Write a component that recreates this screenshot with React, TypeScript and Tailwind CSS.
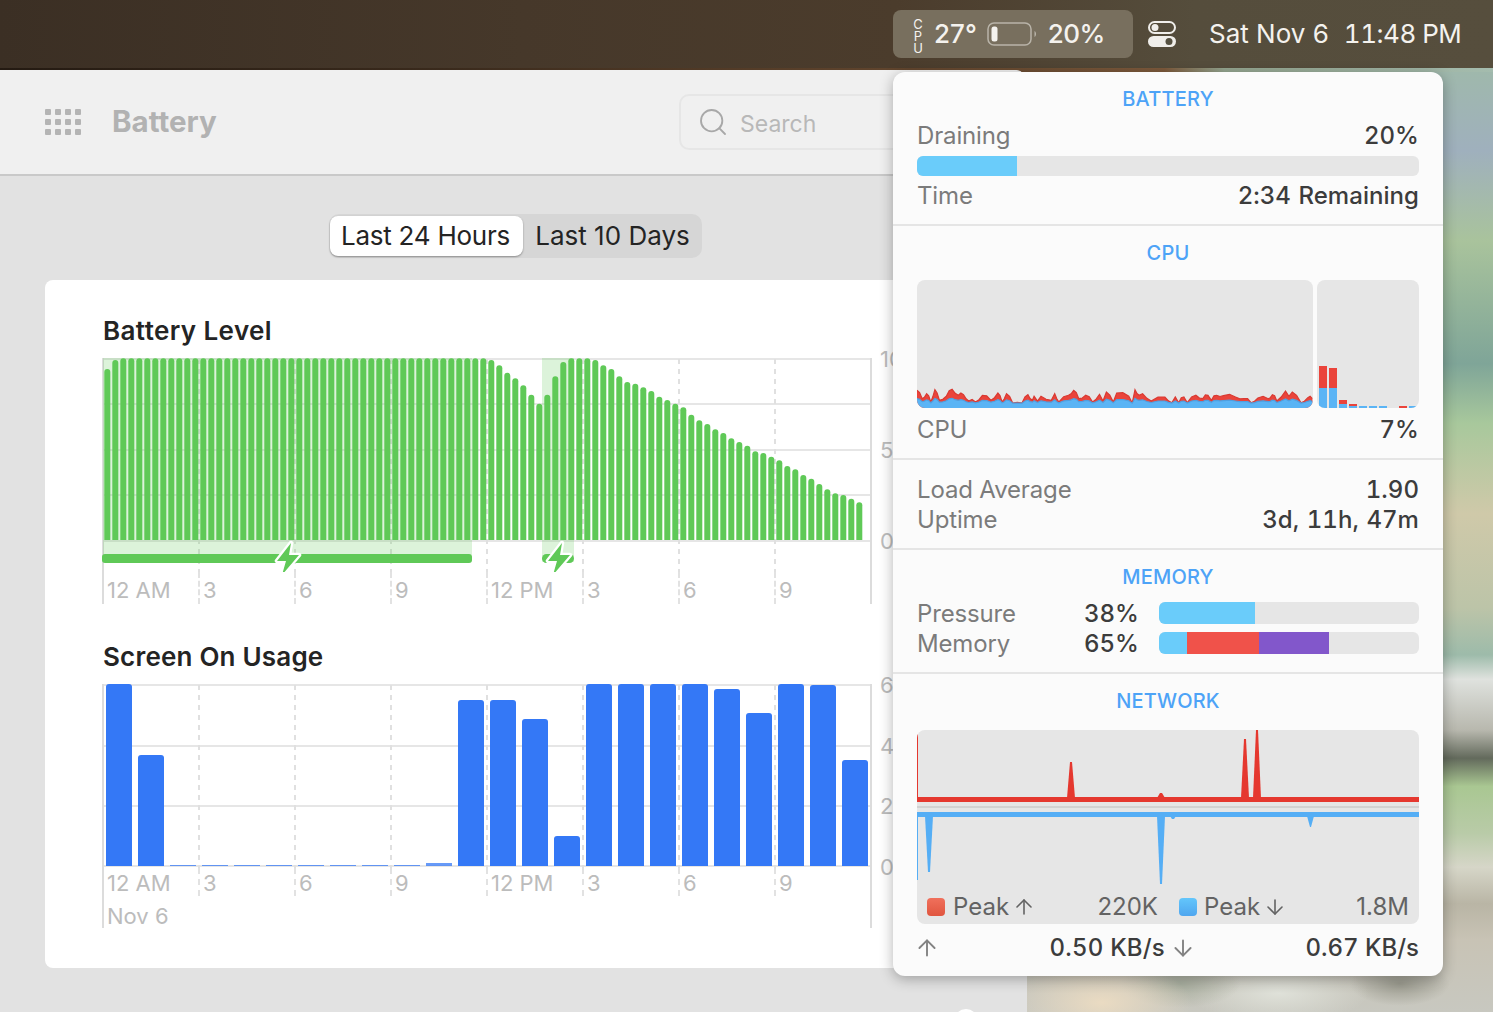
import type { ReactNode } from "react";
import { ArrowDown, ArrowUp, Search } from "lucide-react";

const batteryTops = [
  57, 30, ...Array(45).fill(25),
  25, 30, 46, 68, 85, 106, 134, 161, 134, 79, 36, 25, 25, 25, 30, 46, 57, 79, 96, 101, 112, 123, 140, 150, 161, 172, 194, 211, 222, 238, 249, 265, 276, 287, 304, 309, 320, 331, 348, 358, 375, 386, 402, 418, 430, 435, 446, 457,
];
const screenTops = [684, 755, 865, 865, 865, 865, 865, 865, 865, 865, 863, 700, 700, 719, 836, 684, 684, 684, 684, 689, 713, 684, 685, 760];
const cpuBase: [number, number][] = [
  [50, 360], [65, 385], [78, 370], [90, 395], [102, 358], [115, 390], [135, 378], [152, 357], [170, 375], [185, 373], [200, 392], [220, 395], [240, 375], [265, 390], [285, 368], [297, 395], [310, 370], [328, 398], [355, 398], [372, 373], [385, 390], [390, 378], [400, 392], [410, 378], [440, 390], [450, 370], [462, 395], [490, 375], [505, 360], [520, 385], [540, 375], [560, 395], [580, 372], [590, 392], [600, 365], [620, 395], [630, 368], [665, 378], [675, 398], [683, 358], [695, 375], [705, 370], [730, 392], [770, 380], [790, 397], [800, 380], [810, 397], [825, 380], [835, 397], [860, 375], [880, 385], [895, 375], [905, 390], [920, 375], [940, 376], [975, 380], [1000, 385], [1020, 397], [1040, 383], [1070, 385], [1082, 373], [1095, 392], [1120, 362], [1130, 378], [1140, 365], [1165, 397], [1185, 382], [1198, 385],
];
const cpuPts: [number, number][] = cpuBase.flatMap((p, i) => {
  const n = cpuBase[i + 1];
  if (!n || n[0] - p[0] < 12) return [p];
  const mid: [number, number] = [(p[0] + n[0]) / 2, Math.min(396, (p[1] + n[1]) / 2 + (i % 2 ? 3 : -6))];
  return [p, mid];
});
const cpuX = (X: number) => ((X - 50) / 2.904).toFixed(1);
const redH = (Y: number) => (413 - Y) / 3;
const redLine = cpuPts.map(([X, Y]) => `${cpuX(X)},${(128 - redH(Y)).toFixed(1)}`).join(" L");
const redArea = `M0,128 L${redLine} L396,128 Z`;
const blueLine = cpuPts.map(([X, Y]) => `${cpuX(X)},${(128 - (3 + redH(Y) * 0.36)).toFixed(1)}`).join(" L");
const blueArea = `M0,128 L${blueLine} L396,128 Z`;
const coreBars = [
  { x: 2, red: 366, blue: 388 },
  { x: 12, red: 368, blue: 388 },
  { x: 22, red: 400, blue: 404 },
  { x: 32, red: 404, blue: 406 },
  { x: 42, red: 406, blue: 406 },
  { x: 52, red: 406, blue: 406 },
  { x: 62, red: 406, blue: 406 },
  { x: 82, red: 406, blue: 408 },
  { x: 92, red: 406, blue: 406 },
];
const hourLabels = ["12 AM", "3", "6", "9", "12 PM", "3", "6", "9"];
const dashX = [97, 193, 289, 385, 481, 577, 673];

function Bolt({ x, y }: { x: number; y: number }) {
  return (
    <path
      transform={`translate(${x} ${y})`}
      d="M15 0 L1 18 L10 18 L6 32 L23 12 L13 12 Z"
      fill="#5fc957"
      stroke="#ffffff"
      strokeWidth="4.5"
      strokeLinejoin="round"
      paintOrder="stroke"
    />
  );
}

function HourRow({ className, labelClass }: { className: string; labelClass: string }) {
  return (
    <div className={`flex w-[770px] border-r-2 border-[#dcdcdc] ${className}`}>
      {hourLabels.map((l, i) => (
        <div
          key={i}
          className={`w-[96px] border-l-2 pl-[3px] ${i === 0 ? "border-solid border-[#dcdcdc]" : "border-dashed border-[#e2e2e2]"}`}
        >
          <span className={`block text-[22px] leading-[28px] text-[#bcbcbc] ${labelClass}`}>{l}</span>
        </div>
      ))}
    </div>
  );
}

function BatteryChart() {
  return (
    <svg width="771" height="214" className="block">
      <g stroke="#e6e6e6" strokeWidth="2">
        {[1, 46, 92, 137, 183].map((y) => (
          <line key={y} x1="1" x2="769" y1={y} y2={y} />
        ))}
        <line x1="1" x2="1" y1="0" y2="214" stroke="#dcdcdc" />
        <line x1="769" x2="769" y1="0" y2="214" stroke="#dcdcdc" />
      </g>
      {dashX.map((x) => (
        <line key={x} x1={x} x2={x} y1="1" y2="214" stroke="#e0e0e0" strokeWidth="2" strokeDasharray="5 5" />
      ))}
      <rect x="1" y="0" width="369" height="197" fill="#5fc957" opacity="0.22" />
      <rect x="440" y="0" width="32" height="204" fill="#5fc957" opacity="0.22" />
      {batteryTops.map((t, i) => {
        const x = 2.3 + 8 * i;
        const y = 182 - (570 - t) / 3;
        return <path key={i} d={`M${x} 182 V${y + 3} a3 3 0 0 1 6 0 V182 Z`} fill="#5fc957" />;
      })}
      <rect x="0" y="196" width="370" height="9" rx="3" fill="#5fc957" />
      <rect x="440" y="196" width="32" height="9" rx="4.5" fill="#5fc957" />
      <Bolt x={174} y={185} />
      <Bolt x={445} y={185} />
    </svg>
  );
}

function ScreenChart() {
  return (
    <svg width="771" height="184" className="block">
      <g stroke="#e6e6e6" strokeWidth="2">
        {[1, 62, 122, 182].map((y) => (
          <line key={y} x1="1" x2="769" y1={y} y2={y} />
        ))}
        <line x1="1" x2="1" y1="0" y2="184" stroke="#dcdcdc" />
        <line x1="769" x2="769" y1="0" y2="184" stroke="#dcdcdc" />
      </g>
      {dashX.map((x) => (
        <line key={x} x1={x} x2={x} y1="1" y2="184" stroke="#e0e0e0" strokeWidth="2" strokeDasharray="5 5" />
      ))}
      {screenTops.map((t, i) => {
        const x = 4 + 32 * i;
        const y = t - 684;
        const h = 182 - y;
        if (h < 4) return <rect key={i} x={x} y={y} width="26" height={h} fill="#3478f6" opacity="0.75" />;
        return <path key={i} d={`M${x} 182 V${y + 3} a3 3 0 0 1 3 -3 H${x + 23} a3 3 0 0 1 3 3 V182 Z`} fill="#3478f6" />;
      })}
    </svg>
  );
}

function YAxis({ labels, className }: { labels: string[]; className: string }) {
  return (
    <div className={`ml-[7px] flex flex-col justify-between text-[22px] leading-[28px] text-[#bcbcbc] ${className}`}>
      {labels.map((l) => (
        <span key={l}>{l}</span>
      ))}
    </div>
  );
}

function SectionTitle({ children }: { children: string }) {
  return <div className="h-[22px] text-center text-[20px] leading-[22px] font-medium tracking-[0.2px] text-[#4da3f7]">{children}</div>;
}

const valueClass = "font-medium text-[#3c3c3c] tabular-nums tracking-[0.05px] [word-spacing:1px]";

function Row({ label, value }: { label: string; value: string }) {
  return (
    <div className="flex h-[30px] items-center justify-between text-[24px] leading-[30px]">
      <span className="tracking-[-0.15px] text-[#7b7b7b]">{label}</span>
      <span className={valueClass}>{value}</span>
    </div>
  );
}

function MemRow({ label, value, children }: { label: string; value: string; children: ReactNode }) {
  return (
    <div className="flex h-[30px] items-center text-[24px] leading-[30px]">
      <span className="flex-1 tracking-[-0.15px] text-[#7b7b7b]">{label}</span>
      <span className={valueClass}>{value}</span>
      <div className="mt-[-2px] ml-[20px] flex h-[22px] w-[260px] overflow-hidden rounded-[6px] bg-[#e6e6e6]">{children}</div>
    </div>
  );
}

function Popover() {
  return (
    <div className="absolute top-[72px] left-[893px] z-10 w-[550px] rounded-[12px] bg-[#fbfbfb] shadow-[0_3px_14px_rgba(0,0,0,0.3)]">
      <section className="border-b-2 border-[#e5e5e5] px-[24px] pt-[16px] pb-[13px]">
        <SectionTitle>BATTERY</SectionTitle>
        <div className="mt-[11px]">
          <Row label="Draining" value="20%" />
        </div>
        <div className="mt-[5px] h-[20px] overflow-hidden rounded-[6px] bg-[#e6e6e6]">
          <div className="h-full w-[100px] bg-[#6accfa]" />
        </div>
        <div className="mt-[5px]">
          <Row label="Time" value="2:34 Remaining" />
        </div>
      </section>
      <section className="border-b-2 border-[#e5e5e5] px-[24px] pt-[16px] pb-[13px]">
        <SectionTitle>CPU</SectionTitle>
        <div className="mt-[16px] flex h-[128px] gap-[4px]">
          <div className="w-[396px] overflow-hidden rounded-[8px] bg-[#e6e6e6]">
            <svg width="396" height="128" className="block">
              <path d={redArea} fill="#ea443b" />
              <path d={`M${redLine}`} fill="none" stroke="#d93a32" strokeWidth="1.2" />
              <path d={blueArea} fill="#5ab4f5" />
              <path d={`M${blueLine}`} fill="none" stroke="#4f9fe0" strokeWidth="1.2" />
            </svg>
          </div>
          <div className="w-[102px] overflow-hidden rounded-[8px] bg-[#e6e6e6]">
            <svg width="102" height="128" className="block">
              {coreBars.map((b) => (
                <g key={b.x}>
                  <rect x={b.x} y={b.red - 280} width="8" height={b.blue - b.red} fill="#ea443b" />
                  <rect x={b.x} y={b.blue - 280} width="8" height={408 - b.blue} fill="#5ab4f5" />
                </g>
              ))}
            </svg>
          </div>
        </div>
        <div className="mt-[7px]">
          <Row label="CPU" value="7%" />
        </div>
      </section>
      <section className="border-b-2 border-[#e5e5e5] px-[24px] pt-[15px] pb-[13px]">
        <Row label="Load Average" value="1.90" />
        <Row label="Uptime" value="3d, 11h, 47m" />
      </section>
      <section className="border-b-2 border-[#e5e5e5] px-[24px] pt-[16px] pb-[13px]">
        <SectionTitle>MEMORY</SectionTitle>
        <div className="mt-[11px]">
          <MemRow label="Pressure" value="38%">
            <div className="w-[96px] bg-[#6accfa]" />
          </MemRow>
          <MemRow label="Memory" value="65%">
            <div className="w-[28px] bg-[#6accfa]" />
            <div className="w-[72px] bg-[#f0524a]" />
            <div className="w-[70px] bg-[#8257cb]" />
          </MemRow>
        </div>
      </section>
      <section className="px-[24px] pt-[16px] pb-[13px]">
        <SectionTitle>NETWORK</SectionTitle>
        <div className="mt-[18px] h-[194px] overflow-hidden rounded-[8px] bg-[#e6e6e6]">
          <svg width="502" height="160" className="block">
            <rect x="0" y="67" width="502" height="5" fill="#e5382f" />
            <rect x="0" y="76" width="502" height="2" fill="#d2d2d2" />
            <rect x="0" y="82" width="502" height="5" fill="#55aef5" />
            <path d="M0 3 H1 V67 H0 Z" fill="#e5382f" />
            <path d="M150 68 L153 32 L155 32 L158 68 Z" fill="#e5382f" />
            <path d="M240 68 L243 63 L245 63 L248 68 Z" fill="#e5382f" />
            <path d="M324 68 L327 9 L329 9 L332 68 Z" fill="#e5382f" />
            <path d="M336 68 L339 0 L341 0 L344 68 Z" fill="#e5382f" />
            <path d="M0 87 H1 V150 H0 Z" fill="#55aef5" />
            <path d="M8 86 L11 142 L13 142 L16 86 Z" fill="#55aef5" />
            <path d="M240 86 L243 154 L245 154 L248 86 Z" fill="#55aef5" />
            <path d="M253 86 L255 89 L257 89 L259 86 Z" fill="#55aef5" />
            <path d="M390 86 L393 97 L394 97 L397 86 Z" fill="#55aef5" />
          </svg>
          <div className="flex h-[34px] items-center px-[10px] text-[24px] leading-[30px] text-[#636363]">
            <div className="flex w-[231px] items-center">
              <span className="h-[18px] w-[18px] rounded-[4px] bg-[linear-gradient(180deg,#f0705c,#e0553f)]" />
              <span className="ml-[8px]">Peak</span>
              <ArrowUp size={24} strokeWidth={1.6} className="ml-[3px]" />
              <span className="ml-auto">220K</span>
            </div>
            <div className="ml-[21px] flex flex-1 items-center">
              <span className="h-[18px] w-[18px] rounded-[4px] bg-[linear-gradient(180deg,#63c6fb,#4fa6ef)]" />
              <span className="ml-[7px]">Peak</span>
              <ArrowDown size={24} strokeWidth={1.6} className="ml-[3px]" />
              <span className="ml-auto">1.8M</span>
            </div>
          </div>
        </div>
        <div className="mt-[9px] flex h-[30px] items-center text-[24px] leading-[30px] font-medium text-[#3c3c3c] tabular-nums">
          <div className="flex w-[248px] items-center justify-between">
            <ArrowUp size={26} strokeWidth={1.75} className="ml-[-3px] text-[#828282]" />
            <span className="tracking-[0.2px]">0.50 KB/s</span>
          </div>
          <div className="ml-[5px] flex flex-1 items-center justify-between">
            <ArrowDown size={26} strokeWidth={1.75} className="text-[#828282]" />
            <span>0.67 KB/s</span>
          </div>
        </div>
      </section>
    </div>
  );
}

function MenuBar() {
  return (
    <header className="flex h-[68px] items-center bg-[linear-gradient(90deg,#3b2f24_0%,#46382a_35%,#4b3c2c_60%,#554d3c_80%,#564e3d_100%)] pl-[893px] text-[26px] leading-[32px] text-[#f4f2ee]">
      <div className="flex h-[48px] w-[240px] items-center rounded-[8px] bg-[#786f5e] pl-[18px]">
        <span className="w-[14px] text-[13px] leading-[14px] tracking-[-4px] [text-orientation:upright] [writing-mode:vertical-rl]">CPU</span>
        <span className="ml-[9px] font-medium">27°</span>
        <svg width="52" height="24" viewBox="0 0 52 24" className="ml-[10px]">
          <rect x="1" y="1" width="43" height="22" rx="6" fill="none" stroke="#b9b4a9" strokeWidth="1.5" />
          <rect x="4.5" y="4.5" width="6" height="15" rx="2.5" fill="#f4f2ee" />
          <path d="M47.5 9 C49.5 10 49.5 14 47.5 15 Z" fill="#b9b4a9" />
        </svg>
        <span className="ml-[9px] font-medium tracking-[-0.5px]">20%</span>
      </div>
      <svg width="28" height="26" viewBox="0 0 28 26" className="ml-[15px]">
        <rect x="1" y="1" width="26" height="11" rx="5.5" fill="none" stroke="#f0eeea" strokeWidth="2" />
        <circle cx="7" cy="6.5" r="3.5" fill="#f0eeea" />
        <rect x="0" y="15" width="28" height="11" rx="5.5" fill="#f0eeea" />
        <circle cx="21" cy="20.5" r="3.5" fill="#555040" />
      </svg>
      <span className="ml-[33px]">Sat Nov 6</span>
      <span className="ml-[15px] tracking-[-0.5px] tabular-nums">11:48 PM</span>
    </header>
  );
}

function BatteryWindow() {
  return (
    <div className="relative flex h-[942px] w-[1027px] flex-col overflow-hidden rounded-tr-[12px] bg-[#e2e2e2]">
      <div className="flex h-[106px] shrink-0 items-center border-b-2 border-[#c9c9c9] bg-[#f0f0f0] pl-[45px]">
        <div className="grid grid-cols-4 gap-[4px]">
          {Array.from({ length: 12 }).map((_, i) => (
            <span key={i} className="h-[6px] w-[6px] rounded-[1px] bg-[#b4b4b4]" />
          ))}
        </div>
        <span className="mt-[-2px] ml-[31px] w-[104px] text-[29.5px] leading-[36px] font-bold text-[#b2b2b2]">Battery</span>
        <div className="ml-[463px] flex h-[56px] w-[320px] items-center rounded-[10px] border-2 border-[#e6e6e6] pl-[16px] text-[23px] leading-[30px] text-[#b8b8b8]">
          <Search size={32} strokeWidth={1.4} className="text-[#a8a8a8]" />
          <span className="mt-[4px] ml-[11px]">Search</span>
        </div>
      </div>
      <div className="flex-1 pt-[38px] pl-[45px]">
        <div className="ml-[284px] flex h-[44px] w-[373px] items-center rounded-[10px] bg-[#d6d6d6] pl-[1px] text-[26px] leading-[32px] text-[#242424]">
          <span className="flex h-[40px] w-[193px] items-center justify-center rounded-[8px] bg-white pr-[2px] tracking-[-0.25px] shadow-[0_1px_2px_rgba(0,0,0,0.35)]">Last 24 Hours</span>
          <span className="flex-1 text-center">Last 10 Days</span>
        </div>
        <div className="mt-[22px] h-[688px] w-[938px] rounded-[8px] bg-white pt-[35px] pl-[57px]">
          <h2 className="ml-[1px] h-[32px] text-[26px] leading-[32px] font-semibold tracking-[0.4px] text-[#242424]">Battery Level</h2>
          <div className="mt-[11px] flex">
            <div>
              <BatteryChart />
              <HourRow className="h-[32px]" labelClass="pt-[4px]" />
            </div>
            <YAxis labels={["100%", "50%", "0%"]} className="h-[210px] -translate-y-[13px]" />
          </div>
          <h2 className="mt-[37px] ml-[1px] h-[32px] text-[26px] leading-[32px] font-semibold tracking-[0.2px] text-[#242424]">Screen On Usage</h2>
          <div className="mt-[11px] flex">
            <div>
              <ScreenChart />
              <HourRow className="h-[28px]" labelClass="pt-[1px]" />
              <div className="h-[32px] w-[770px] border-r-2 border-l-2 border-[#dcdcdc] pt-[6px] pl-[3px] text-[22px] leading-[28px] text-[#bcbcbc]">Nov 6</div>
            </div>
            <YAxis labels={["60m", "40m", "20m", "0m"]} className="h-[210px] -translate-y-[13px]" />
          </div>
        </div>
      </div>
      <span className="absolute top-[939px] left-[954px] h-[24px] w-[24px] rounded-full bg-white" />
    </div>
  );
}

export default function App() {
  return (
    <div className="relative h-[1012px] w-full overflow-hidden font-['Inter',sans-serif]">
      <MenuBar />
      <main className="flex h-[944px] items-start bg-[linear-gradient(90deg,#241a12_0%,#3a2a1c_30%,#6b4c32_68%,#7d5a3c_78%,#94a58f_82%,#a4bcae_100%)] pt-[2px]">
        <BatteryWindow />
        <div className="mt-[2px] h-[940px] flex-1 bg-[radial-gradient(ellipse_90px_40px_at_16%_99%,#eadbc2_0%,rgba(234,219,194,0)_100%),radial-gradient(ellipse_60px_24px_at_33%_97%,#a8ae9f_0%,rgba(168,174,159,0)_100%),radial-gradient(ellipse_90px_30px_at_54%_98%,#dfe1d9_0%,rgba(223,225,217,0)_100%),radial-gradient(ellipse_50px_22px_at_80%_97%,#9a9a8e_0%,rgba(154,154,142,0)_100%),linear-gradient(180deg,#9fb8ac_0%,#9fb0bd_8.4%,#a9c39c_18%,#7fa598_31%,#a8c89c_37.4%,#cfc9a9_47%,#bcc4a8_57%,#9dbbaa_62%,#dfe2de_64.6%,#b8b8ae_70%,#636a5c_73%,#a9c792_76%,#b9cba8_81%,#d6d6c8_84.6%,#b9b5a5_88.5%,#c8c3b5_92.3%,#c8c8c0_100%)]" />
      </main>
      <Popover />
    </div>
  );
}
